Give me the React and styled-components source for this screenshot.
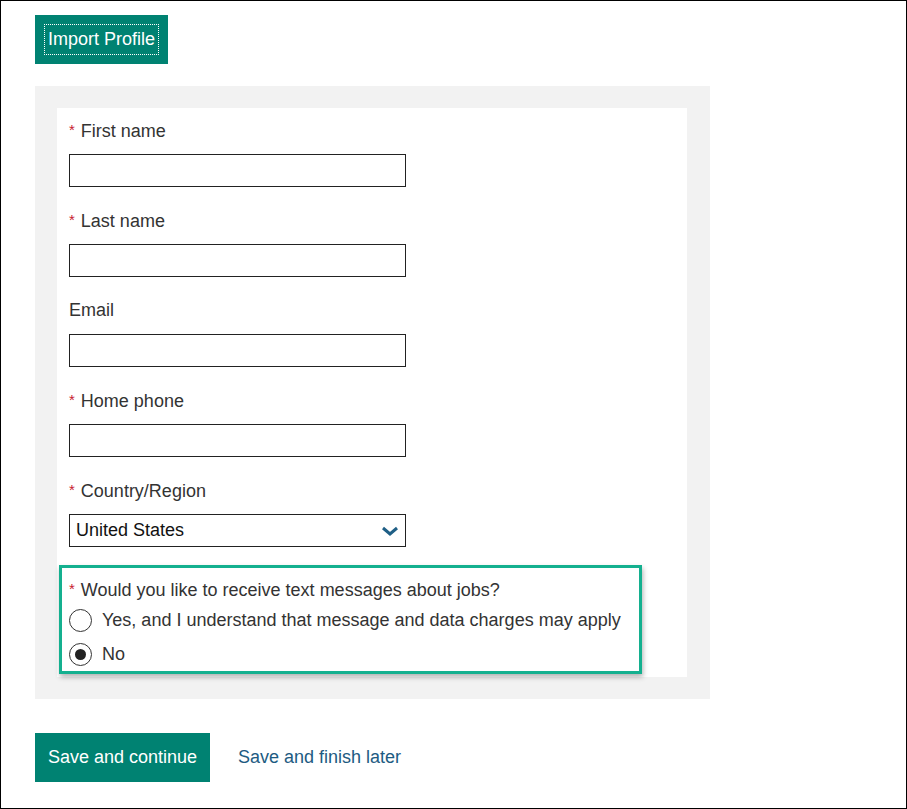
import React from 'react'
import styled, { createGlobalStyle } from 'styled-components'

const GlobalStyle = createGlobalStyle`
  html, body {
    margin: 0;
    padding: 0;
    background: #fff;
  }
  * { box-sizing: border-box; }
`;

const Frame = styled.div`
  width: 907px;
  height: 809px;
  border: 1px solid #000;
  padding: 14px 0 0 34px;
  font-family: "Liberation Sans", Arial, sans-serif;
  font-size: 18px;
  color: #333;
`;

const GreenButton = styled.button`
  display: flex;
  align-items: center;
  justify-content: center;
  height: 49px;
  width: ${(props) => props.width}px;
  padding: 0;
  border: none;
  background: #008272;
  color: #fff;
  font-family: inherit;
  font-size: 18px;
  cursor: pointer;
  ${(props) => props.focused && `
    outline: 1px dotted #fff;
    outline-offset: -10px;
  `}
`;

const Panel = styled.div`
  width: 675px;
  margin-top: 22px;
  background: #f2f2f2;
  padding: 22px 23px 22px 22px;
`;

const Inner = styled.div`
  background: #fff;
  padding: 12px 12px 3px 12px;
`;

const Field = styled.div`
  margin-bottom: 23px;
`;

const Label = styled.div`
  line-height: 20px;
  height: 20px;
  margin-bottom: 14px;
  color: #333;
`;

const Star = styled.span`
  color: #c8202f;
  font-size: 15px;
  margin-right: 6px;
  vertical-align: 2px;
`;

const Input = styled.div`
  width: 337px;
  height: 33px;
  border: 1px solid #222;
  background: #fff;
`;

const Select = styled(Input)`
  display: flex;
  align-items: center;
  justify-content: space-between;
  padding: 0 6px 0 6px;
  color: #111;
`;

const Highlight = styled.div`
  width: 583px;
  margin: -5px 0 0 -10px;
  border: 3px solid #14b08f;
  box-shadow: 1px 3px 5px rgba(0, 0, 0, 0.3);
  padding: 11px 7px 4px 7px;
`;

const Question = styled.div`
  line-height: 20px;
  margin-bottom: 9px;
`;

const RadioRow = styled.div`
  display: flex;
  align-items: center;
  height: 23px;
  margin-bottom: 11px;
  &:last-child { margin-bottom: 1px; }
`;

const Radio = styled.span`
  width: 23px;
  height: 23px;
  border-radius: 50%;
  border: 1.5px solid #333;
  background: #fff;
  margin-right: 10px;
  display: flex;
  align-items: center;
  justify-content: center;
  &::after {
    content: '';
    width: 11px;
    height: 11px;
    border-radius: 50%;
    background: ${(props) => (props.checked ? '#222' : 'transparent')};
  }
`;

const Actions = styled.div`
  display: flex;
  align-items: center;
  gap: 28px;
  margin-top: 34px;
`;

const Link = styled.a`
  color: #1d5b82;
  text-decoration: none;
  font-size: 18px;
`;

const fields = [
  { label: 'First name', required: true },
  { label: 'Last name', required: true },
  { label: 'Email', required: false },
  { label: 'Home phone', required: true },
];

const App = () => {
  return (
    <>
      <GlobalStyle />
      <Frame>
        <GreenButton width={133} focused>Import Profile</GreenButton>
        <Panel>
          <Inner>
            {fields.map((f) => (
              <Field key={f.label}>
                <Label>
                  {f.required && <Star>*</Star>}
                  {f.label}
                </Label>
                <Input />
              </Field>
            ))}
            <Field>
              <Label><Star>*</Star>Country/Region</Label>
              <Select>
                <span>United States</span>
                <svg width="18" height="10" viewBox="0 0 18 10">
                  <polyline points="2,2 9,8 16,2" fill="none" stroke="#1f5f86" strokeWidth="3" />
                </svg>
              </Select>
            </Field>
            <Highlight>
              <Question><Star>*</Star>Would you like to receive text messages about jobs?</Question>
              <RadioRow>
                <Radio />
                Yes, and I understand that message and data charges may apply
              </RadioRow>
              <RadioRow>
                <Radio checked />
                No
              </RadioRow>
            </Highlight>
          </Inner>
        </Panel>
        <Actions>
          <GreenButton width={175}>Save and continue</GreenButton>
          <Link href="#">Save and finish later</Link>
        </Actions>
      </Frame>
    </>
  )
}

export default App
